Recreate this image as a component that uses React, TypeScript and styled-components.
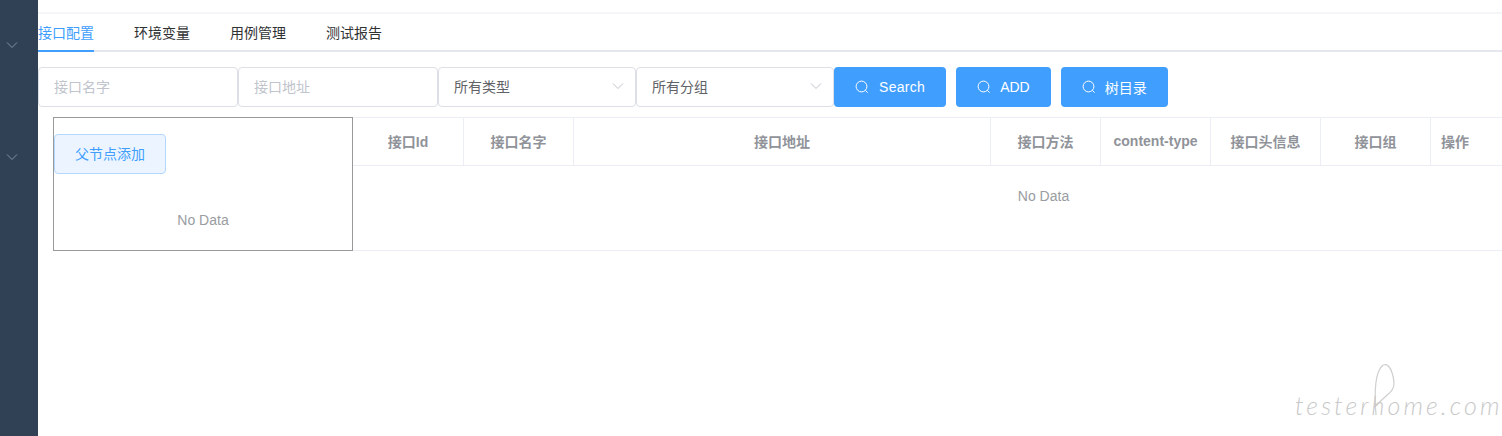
import React from "react"
import styled, { createGlobalStyle } from "styled-components"

const GlobalStyle = createGlobalStyle`
  html, body {
    margin: 0;
    padding: 0;
    background: #fff;
  }
  * {
    box-sizing: border-box;
  }
  body {
    font-family: "Liberation Sans", "Noto Sans CJK SC", sans-serif;
    font-size: 14px;
  }
`

const Layout = styled.div`
  position: relative;
  display: flex;
  height: 100vh;
  overflow: hidden;
`

const Sidebar = styled.aside`
  flex: 0 0 38px;
  display: flex;
  flex-direction: column;
  gap: 100px;
  padding-top: 39px;
  background: #304156;
`

const MenuArrow = styled.svg`
  display: block;
  width: 12px;
  height: 12px;
  margin-left: 6px;
  fill: none;
  stroke: #8391a3;
  stroke-width: 1;
`

const Main = styled.main`
  flex: 1;
  min-width: 0;
  display: flex;
  flex-direction: column;
`

const Navbar = styled.div`
  height: 14px;
  border-bottom: 2px solid #f5f6f7;
`

const Tabs = styled.div`
  display: flex;
  gap: 40px;
  height: 38px;
  border-bottom: 2px solid #e4e7ed;
`

const Tab = styled.div<{ $active?: boolean }>`
  height: 38px;
  line-height: 38px;
  color: ${props => (props.$active ? "#409eff" : "#303133")};
  border-bottom: 2px solid ${props => (props.$active ? "#409eff" : "transparent")};
`

const FilterBar = styled.div`
  display: flex;
  height: 40px;
  margin-top: 15px;
`

const Field = styled.div<{ $width: number; $placeholder?: boolean }>`
  display: flex;
  align-items: center;
  justify-content: space-between;
  width: ${props => props.$width}px;
  height: 40px;
  padding: 0 15px 2px;
  border: 1px solid #dcdfe6;
  border-radius: 4px;
  color: ${props => (props.$placeholder ? "#c0c4cc" : "#606266")};
`

const FieldArrow = styled.svg`
  width: 12px;
  height: 12px;
  margin-right: -4px;
  fill: none;
  stroke: #c0c4cc;
  stroke-width: 1;
`

const Actions = styled.div`
  display: flex;
  gap: 10px;
`

const PrimaryButton = styled.button<{ $wide?: boolean }>`
  display: flex;
  align-items: center;
  gap: ${props => (props.$wide ? "10px" : "9px")};
  height: 40px;
  padding: 0 21px;
  border: 0;
  border-radius: 4px;
  background: #409eff;
  color: #fff;
  font: inherit;
  letter-spacing: ${props => (props.$wide ? "0.3px" : "0")};
`

const SearchIcon = styled.svg`
  width: 14px;
  height: 14px;
  fill: none;
  stroke: #fff;
  stroke-width: 1;
`

const Content = styled.div`
  display: flex;
  margin-top: 10px;
  padding-left: 15px;
`

const TreeBox = styled.section`
  flex: 0 0 300px;
  height: 134px;
  padding-top: 16px;
  border: 1px solid #999;
`

const PlainButton = styled.button`
  display: block;
  width: 112px;
  height: 40px;
  padding: 0 0 2px;
  border: 1px solid #b3d8ff;
  border-radius: 4px;
  background: #ecf5ff;
  color: #409eff;
  font: inherit;
`

const TreeEmpty = styled.div`
  margin-top: 38px;
  line-height: 16px;
  text-align: center;
  color: #999ca1;
`

const Table = styled.section`
  flex: 1;
  min-width: 0;
  height: 134px;
  overflow: hidden;
  border-top: 1px solid #ebeef5;
  border-bottom: 1px solid #ebeef5;
`

const HeaderRow = styled.div`
  display: grid;
  grid-template-columns: 111px 110px 417px 110px 110px 110px 110px 1fr;
  height: 48px;
  border-bottom: 1px solid #ebeef5;
`

const HeaderCell = styled.div<{ $left?: boolean }>`
  display: flex;
  align-items: center;
  justify-content: ${props => (props.$left ? "flex-start" : "center")};
  padding-left: ${props => (props.$left ? "10px" : "0")};
  padding-bottom: 1px;
  border-right: 1px solid #ebeef5;
  color: #909399;
  font-weight: 700;
  white-space: nowrap;

  &:last-child {
    border-right: 0;
  }
`

const TableEmpty = styled.div`
  width: 1381px;
  padding-top: 22px;
  line-height: 16px;
  text-align: center;
  color: #999ca1;
`

const Watermark = styled.div`
  position: absolute;
  right: 0;
  bottom: 0;
  width: 232px;
  height: 86px;
  color: #c9c9c9;
  pointer-events: none;
`

const WatermarkText = styled.span`
  position: absolute;
  left: 25px;
  top: 40px;
  font-family: "Lato", sans-serif;
  font-weight: 300;
  font-style: italic;
  font-size: 25px;
  line-height: 30px;
  letter-spacing: 3.1px;
  white-space: nowrap;
`

const WatermarkLoop = styled.svg`
  position: absolute;
  inset: 0;
  width: 232px;
  height: 86px;
  fill: none;
  stroke: #cfcfcf;
  stroke-width: 1.2;
`

const Chevron = () => (
  <path d="M1 3.5 L6 8.5 L11 3.5" />
)

const Search = () => (
  <SearchIcon viewBox="0 0 14 14">
    <circle cx="6.5" cy="6.5" r="5.4" />
    <path d="M10.4 10.4 L12.6 12.6" />
  </SearchIcon>
)

const columns = ["接口Id", "接口名字", "接口地址", "接口方法", "content-type", "接口头信息", "接口组"]

const App = () => {
  return (
    <Layout>
      <GlobalStyle />
      <Sidebar>
        <MenuArrow viewBox="0 0 12 12"><Chevron /></MenuArrow>
        <MenuArrow viewBox="0 0 12 12"><Chevron /></MenuArrow>
      </Sidebar>
      <Main>
        <Navbar />
        <Tabs>
          <Tab $active>接口配置</Tab>
          <Tab>环境变量</Tab>
          <Tab>用例管理</Tab>
          <Tab>测试报告</Tab>
        </Tabs>
        <FilterBar>
          <Field $width={200} $placeholder>接口名字</Field>
          <Field $width={200} $placeholder>接口地址</Field>
          <Field $width={198}>
            所有类型
            <FieldArrow viewBox="0 0 12 12"><Chevron /></FieldArrow>
          </Field>
          <Field $width={198}>
            所有分组
            <FieldArrow viewBox="0 0 12 12"><Chevron /></FieldArrow>
          </Field>
          <Actions>
            <PrimaryButton $wide><Search />Search</PrimaryButton>
            <PrimaryButton><Search />ADD</PrimaryButton>
            <PrimaryButton><Search />树目录</PrimaryButton>
          </Actions>
        </FilterBar>
        <Content>
          <TreeBox>
            <PlainButton>父节点添加</PlainButton>
            <TreeEmpty>No Data</TreeEmpty>
          </TreeBox>
          <Table>
            <HeaderRow>
              {columns.map(name => (
                <HeaderCell key={name}>{name}</HeaderCell>
              ))}
              <HeaderCell $left>操作</HeaderCell>
            </HeaderRow>
            <TableEmpty>No Data</TableEmpty>
          </Table>
        </Content>
      </Main>
      <Watermark>
        <WatermarkLoop viewBox="0 0 232 86">
          <path d="M106 65 C104 40 106 22 112 16 C116 12 122 16 124 32 C125 42 116 44 106 56" />
        </WatermarkLoop>
        <WatermarkText>testerhome.com</WatermarkText>
      </Watermark>
    </Layout>
  )
}

export default App
